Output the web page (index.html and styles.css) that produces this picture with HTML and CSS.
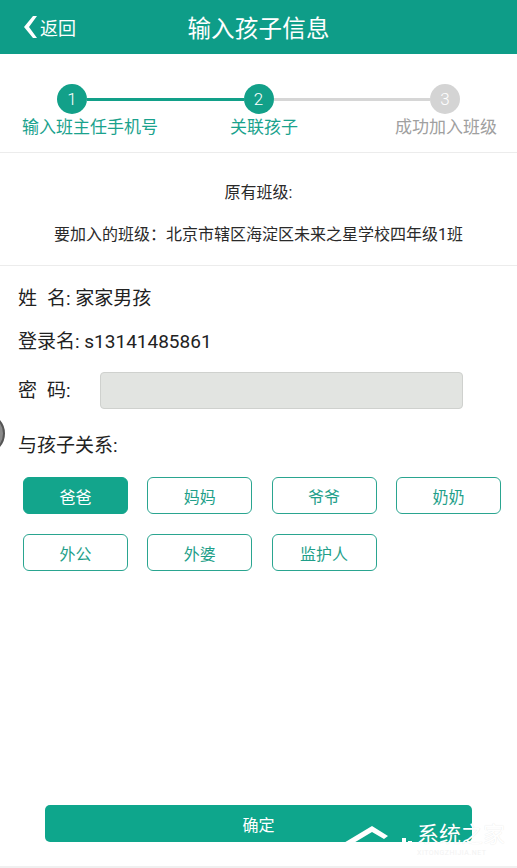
FILE: index.html
```html
<!DOCTYPE html>
<html lang="zh-CN">
<head>
<meta charset="utf-8">
<title>输入孩子信息</title>
<link rel="stylesheet" href="styles.css">
</head>
<body>
<div class="page">
  <header class="topbar">
    <a class="back">
      <svg class="chev" width="16" height="24" viewBox="0 0 16 24"><path d="M12 1 L16 1 L8 12 L16 23 L12 23 L3 12 Z" fill="#fff"/></svg>
      <span>返回</span>
    </a>
    <h1 class="title">输入孩子信息</h1>
    <span></span>
  </header>

  <section class="steps">
    <div class="track">
      <span class="dot on">1</span>
      <span class="bar on"></span>
      <span class="dot on">2</span>
      <span class="bar"></span>
      <span class="dot">3</span>
    </div>
    <div class="labels">
      <span class="lab on">输入班主任手机号</span>
      <span class="lab on mid">关联孩子</span>
      <span class="lab end">成功加入班级</span>
    </div>
  </section>

  <section class="classinfo">
    <p>原有班级:</p>
    <p>要加入的班级：北京市辖区海淀区未来之星学校四年级1班</p>
  </section>

  <section class="form">
    <div class="row"><span class="k2">姓</span><span class="k2b">名</span>:&nbsp;家家男孩</div>
    <div class="row">登录名:&nbsp;s13141485861</div>
    <div class="row pw"><span class="pwlabel"><span class="k2">密</span><span class="k2b">码</span>:</span><span class="input"></span></div>
    <div class="row rel">与孩子关系:</div>
    <div class="choices">
      <button class="chip sel">爸爸</button>
      <button class="chip">妈妈</button>
      <button class="chip">爷爷</button>
      <button class="chip">奶奶</button>
      <button class="chip">外公</button>
      <button class="chip">外婆</button>
      <button class="chip">监护人</button>
    </div>
  </section>

  <footer class="foot">
    <button class="ok">确定</button>
  </footer>

  <span class="float-ball"></span>
  <div class="watermark">
    <svg class="wm-logo" width="72" height="38" viewBox="0 0 72 38"><path d="M0 20 L30 2 L46 12 L42 15 L30 8 L10 20 Z" fill="#fff"/><path d="M16 22 L30 22 L30 26 L20 26 L20 37 L16 37 Z" fill="#fff" opacity="0.75"/><path d="M24 30 H40 V33 H24 Z" fill="#fff" opacity="0.6"/><path d="M34 20 H56 V24 H34 Z" fill="#fff" opacity="0.9"/><rect x="60" y="14" width="4" height="4" fill="#fff"/><rect x="66" y="17" width="4" height="4" fill="#fff"/><rect x="60" y="21" width="4" height="4" fill="#fff" opacity="0.7"/></svg>
    <div class="wm-words">
      <span class="wm-text">系统之家</span>
      <span class="wm-url">XITONGZHIJIA.NET</span>
    </div>
  </div>
</div>
</body>
</html>
```

FILE: styles.css
```css
* { box-sizing: border-box; }
html, body { margin: 0; padding: 0; }
body {
  font-family: "Roboto", "Noto Sans CJK SC", "Noto Sans", sans-serif;
  background: #fff;
  color: #222;
}
.page {
  position: relative;
  width: 517px;
  height: 868px;
  display: flex;
  flex-direction: column;
  overflow: hidden;
}
.topbar {
  height: 54px;
  flex: none;
  background: #0e9d88;
  display: grid;
  grid-template-columns: 1fr auto 1fr;
  align-items: center;
  color: #fff;
}
.back {
  display: flex;
  align-items: center;
  gap: 3px;
  padding-left: 21px;
  font-size: 18px;
}
.chev { display: block; }
.title {
  margin: 0;
  font-size: 23.5px;
  font-weight: 400;
  letter-spacing: 0.2px;
}
.steps {
  padding-top: 30px;
  height: 99px;
  flex: none;
  border-bottom: 1px solid #ececec;
}
.track {
  display: flex;
  align-items: center;
  padding: 0 57px;
}
.dot {
  width: 30px;
  height: 30px;
  border-radius: 50%;
  background: #d4d4d4;
  color: #fff;
  font-size: 17px;
  font-weight: 300;
  display: flex;
  align-items: center;
  justify-content: center;
  flex: none;
}
.dot.on { background: #12a089; }
.bar { flex: 1; height: 3px; background: #d6d6d6; }
.bar.on { background: #12a089; }
.labels {
  display: grid;
  grid-template-columns: 1fr auto 1fr;
  padding: 0 20px 0 22px;
  margin-top: 2px;
  font-size: 17px;
  line-height: 23px;
}
.lab { color: #a0a0a0; }
.lab.on { color: #1aa28d; }
.lab.mid { padding-left: 9px; }
.lab.end { text-align: right; }
.classinfo {
  padding: 19px 0 9px;
  flex: none;
  border-bottom: 1px solid #ececec;
  text-align: center;
}
.classinfo p {
  margin: 0;
  font-size: 16px;
  line-height: 42px;
  color: #2a2a2a;
}
.form { padding: 11px 0 0 18px; }
.row {
  font-size: 19px;
  line-height: 43px;
  height: 43px;
  color: #222;
}
.k2 { display: inline-block; width: 29px; }
.k2b { display: inline-block; }
.row.pw {
  display: flex;
  align-items: center;
  height: 37px;
  margin-top: 9px;
}
.pwlabel { width: 82px; }
.input {
  width: 363px;
  height: 37px;
  background: #e2e4e1;
  border: 1px solid #cfd1ce;
  border-radius: 4px;
}
.row.rel { margin-top: 15px; }
.choices {
  margin-top: 10px;
  padding-left: 5px;
  display: grid;
  grid-template-columns: repeat(4, 105px);
  column-gap: 19.3px;
  row-gap: 20px;
}
.chip {
  height: 37px;
  border: 1.5px solid #2aa590;
  border-radius: 6px;
  background: #fff;
  color: #1f9f8a;
  font-family: inherit;
  font-size: 16px;
  padding: 0;
}
.chip.sel {
  background: #13a58c;
  border-color: #13a58c;
  color: #fff;
}
.foot {
  margin-top: auto;
  padding: 0 45px 24px;
  border-bottom: 2px solid #f0f0f0;
}
.ok {
  width: 427px;
  height: 37px;
  border: none;
  border-radius: 5px;
  background: #0ea68c;
  color: #fff;
  font-family: inherit;
  font-size: 16px;
}
.float-ball {
  position: absolute;
  left: -36px;
  top: 413px;
  width: 41px;
  height: 41px;
  border-radius: 50%;
  background: #8a8a8a;
  border: 2px solid #555;
}
.watermark {
  position: absolute;
  left: 342px;
  top: 822px;
  display: flex;
  align-items: flex-start;
}
.wm-logo { display: block; margin-top: 2px; }
.wm-words {
  display: flex;
  flex-direction: column;
  margin-left: 3px;
}
.wm-text {
  color: #fff;
  font-size: 22px;
  line-height: 26px;
  text-shadow: 0 0 1px rgba(0,0,0,0.12);
}
.wm-url {
  color: #f2f2f2;
  font-size: 7px;
  line-height: 10px;
  letter-spacing: 0.5px;
}
```
